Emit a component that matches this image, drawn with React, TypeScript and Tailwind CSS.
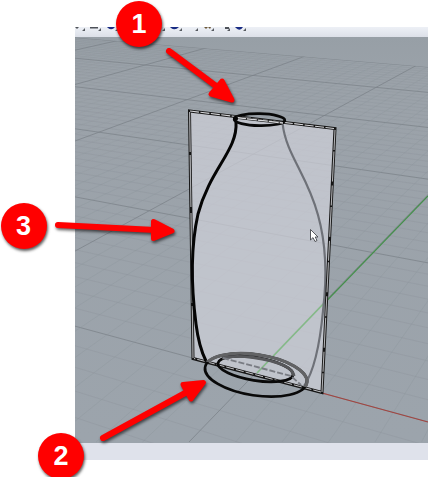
import React from "react";

const HORIZON = -91;
const depths = Array.from({ length: 64 }, (_, i) => i - 13);
const rays = Array.from({ length: 66 }, (_, i) => i - 45);

function Grid() {
  return (
    <g fill="none">
      {depths.map((i) => {
        const d = i / 10 + 2.227;
        const major = i % 10 === 0;
        return (
          <line key={"d" + i} x1={75} y1={HORIZON + 929 / d} x2={428} y2={HORIZON + 1142 / d}
            stroke={major ? "#7b8289" : "#8c9399"} strokeOpacity={major ? 0.85 : i > 25 ? 0.36 : 0.45} strokeWidth={major ? 0.9 : 0.8} />
        );
      })}
      {rays.map((i) => {
        const major = i % 10 === 0;
        return (
          <line key={"r" + i} x1={704} y1={HORIZON} x2={189 + i * 46.5} y2={442}
            stroke={major ? "#7b8289" : "#8c9399"} strokeOpacity={major ? 0.85 : i < -15 ? 0.22 : 0.4} strokeWidth={major ? 0.9 : 0.8} />
        );
      })}
    </g>
  );
}

function Viewport() {
  return (
    <svg className="block h-[406px] w-[353px]" viewBox="75 37 353 406">
      <defs>
        <clipPath id="floor"><path d="M75 37.5L428 67V443H75Z" /></clipPath>
        <clipPath id="front"><path d="M180 90H340V396L192 358H180Z" /></clipPath>
        <linearGradient id="sky" x1="0" y1="0" x2="0" y2="1">
          <stop offset="0" stopColor="#979fa6" /><stop offset="0.1" stopColor="#9ba2a9" /><stop offset="1" stopColor="#9ca4ac" />
        </linearGradient>
      </defs>
      <rect x="75" y="37" width="353" height="406" fill="url(#sky)" />
      <g clipPath="url(#floor)"><Grid /></g>
      <path d="M322 393L428 422" stroke="#a3443f" strokeWidth="1.1" />
      <path d="M257 373L428 196" stroke="#438f49" strokeWidth="1.2" />
      <path d="M189.500 111L335 129L322 393L193 359Z" fill="#d0d2da" fillOpacity="0.7" />
      <path d="M257 373L326 301" stroke="#83ba86" strokeWidth="1.3" />

      <g fill="none">
        <path d="M282.5 123C286 155 307 174 318 215C327 247 327 278 323 311C320 343 315 370 304 386" stroke="#6e7178" strokeWidth="2.2" />
        <path d="M189.500 111L335 128.500L322 392.500L193 358.500Z" stroke="#151515" strokeWidth="3" />
        <path d="M190 111L334 128.500" stroke="#d5d6d9" strokeWidth="1.1" strokeDasharray="9 1.5" />
        <path d="M335 130L322 392" stroke="#b0b1b4" strokeWidth="1.1" strokeDasharray="20 1.5 30 4" />
        <path d="M321 392L194 358.500" stroke="#c0c1c4" strokeWidth="1" strokeDasharray="8 2" />
        <path d="M193 358L189.600 112" stroke="#a9aaad" strokeWidth="1.2" strokeDasharray="52 3 90 6" />
        <path d="M236 122C238 150 210 169 198 214C190 250 192 293 196 324C198 340 201 351 206 361" stroke="#050505" strokeWidth="3" />
        <ellipse cx="259.5" cy="119.7" rx="25.3" ry="6" transform="rotate(1 259.5 119.7)" stroke="#080808" strokeWidth="2.8" />
        <path d="M236 117.5L283 123" stroke="#222" strokeWidth="2.6" />
        <path d="M236 117.5L283 123" stroke="#d8d9dc" strokeWidth="1.3" strokeDasharray="10 1" />
        <circle cx="235.5" cy="118.5" r="2.5" fill="#050505" />
        <ellipse cx="256" cy="375" rx="51.5" ry="20.5" transform="rotate(8.5 256 375)" stroke="#090909" strokeWidth="2.7" />
        <g clipPath="url(#front)">
          <ellipse cx="256" cy="375" rx="51.5" ry="20.5" transform="rotate(8.5 256 375)" stroke="#626365" strokeWidth="3.2" />
        </g>
        <ellipse cx="255.5" cy="369" rx="38" ry="11.5" transform="rotate(9 255.5 369)" stroke="#090909" strokeWidth="2.8" />
        <path d="M222 358C238 354 268 358 285 366Q293 370 294 376" stroke="#57585b" strokeWidth="3" />
        <path d="M223 358L291 376L301 385" stroke="#797c83" strokeWidth="1.9" strokeDasharray="6 2" />
      </g>
      <path d="M310.5 229.5V240L313 237.6L315 241.5L317 240.5L315.2 237H318Z" fill="#fff" stroke="#34363b" strokeWidth="0.8" />
    </svg>
  );
}

function Badge({ n, place }: { n: string; place: string }) {
  return (
    <div className={`absolute flex size-[46px] items-center justify-center rounded-full bg-[#ff0000] pt-px font-['Liberation_Sans',Arial,sans-serif] text-[27px] leading-none font-bold text-white shadow-[1px_2px_3px_rgba(0,0,0,0.65)] ${place}`}>
      {n}
    </div>
  );
}

function Arrows() {
  return (
    <svg className="absolute inset-0 h-[477px] w-[428px]" viewBox="0 0 428 477">
      <g className="drop-shadow-[1px_2px_1.5px_rgba(0,0,0,0.6)]" fill="#ff0000" stroke="#ff0000" strokeLinejoin="round" strokeLinecap="round">
        <path d="M169 51L216 86" strokeWidth="6" />
        <path d="M222 81L211 94L232 100Z" strokeWidth="5" />
        <path d="M58 225L155 230" strokeWidth="6" />
        <path d="M153.500 221.500V238.500L172 231Z" strokeWidth="5" />
        <path d="M103 438L187 392" strokeWidth="6" />
        <path d="M183 384.500L191 399L203.500 382.500Z" strokeWidth="5" />
      </g>
    </svg>
  );
}

export default function App() {
  return (
    <main className="relative h-[477px] w-[428px] overflow-hidden bg-white pt-[27px]">
      <section className="ml-[75px] flex flex-col">
        <div className="h-[10px] bg-linear-to-b from-[#edf0f6] to-[#dce0e8]">
          <svg className="block h-[10px] w-[353px]" viewBox="75 27 353 10">
            <path d="M75 27h4l-2 2zM90 27h8v1.500h-8zM225 27v2h4v-2z" fill="#4e5259" />
            <path d="M204 27l2 2 2-2 2 2 1-2z" fill="#6a5637" />
            <path d="M107 27h8q-3 4-7 1zM170 27h9q-4 4-8 1zM235 27h8q-3 5-7 1z" fill="#182b83" />
            <path d="M85 28v3h-3zM101 28v3h-3zM118 28v3h-3zM165 28v3h-3zM182 28v3h-3zM198 28v3h-3zM214 28v3h-3zM230 28v3h-3zM246 28v3h-3z" fill="#575b61" />
          </svg>
        </div>
        <Viewport />
        <div className="h-[17px] bg-[#dfe2eb]" />
      </section>
      <Arrows />
      <Badge n="1" place="left-[116px] top-[0.500px]" />
      <Badge n="2" place="left-[38px] top-[432.500px]" />
      <Badge n="3" place="left-[0.500px] top-[202.500px]" />
    </main>
  );
}
